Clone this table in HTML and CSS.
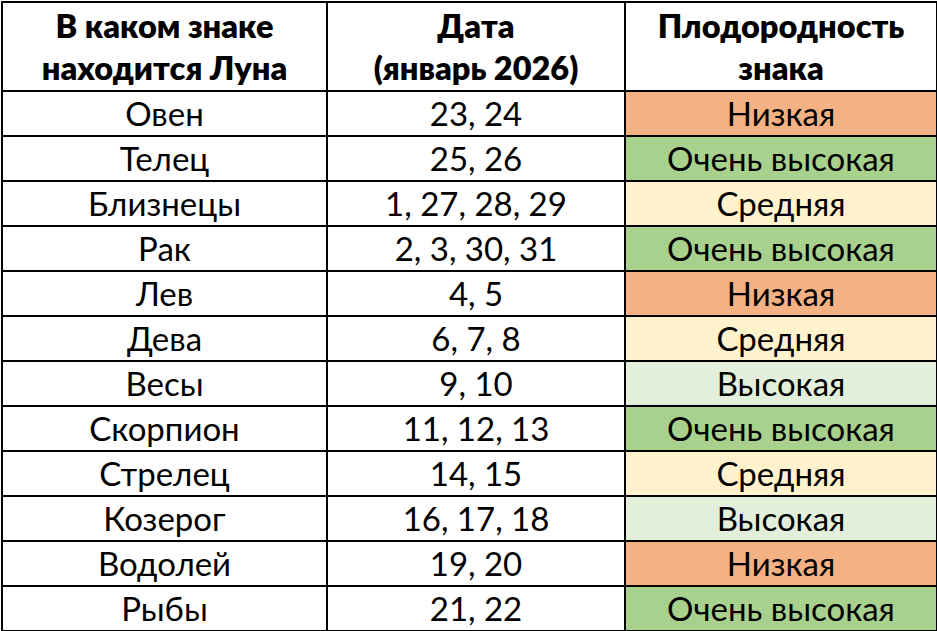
FILE: index.html
```html
<!DOCTYPE html>
<html lang="ru">
<head>
<meta charset="utf-8">
<link rel="stylesheet" href="styles.css">
</head>
<body>
<table class="moon">
  <colgroup>
    <col class="c1"><col class="c2"><col class="c3">
  </colgroup>
  <thead>
    <tr class="head">
      <th>В каком знаке<br>находится Луна</th>
      <th>Дата<br>(январь 2026)</th>
      <th>Плодородность<br>знака</th>
    </tr>
  </thead>
  <tbody>
    <tr><td>Овен</td><td>23, 24</td><td class="low">Низкая</td></tr>
    <tr><td>Телец</td><td>25, 26</td><td class="vhigh">Очень высокая</td></tr>
    <tr><td>Близнецы</td><td>1, 27, 28, 29</td><td class="mid">Средняя</td></tr>
    <tr><td>Рак</td><td>2, 3, 30, 31</td><td class="vhigh">Очень высокая</td></tr>
    <tr><td>Лев</td><td>4, 5</td><td class="low">Низкая</td></tr>
    <tr><td>Дева</td><td>6, 7, 8</td><td class="mid">Средняя</td></tr>
    <tr><td>Весы</td><td>9, 10</td><td class="high">Высокая</td></tr>
    <tr><td>Скорпион</td><td>11, 12, 13</td><td class="vhigh">Очень высокая</td></tr>
    <tr><td>Стрелец</td><td>14, 15</td><td class="mid">Средняя</td></tr>
    <tr><td>Козерог</td><td>16, 17, 18</td><td class="high">Высокая</td></tr>
    <tr><td>Водолей</td><td>19, 20</td><td class="low">Низкая</td></tr>
    <tr><td>Рыбы</td><td>21, 22</td><td class="vhigh">Очень высокая</td></tr>
  </tbody>
</table>
</body>
</html>
```
FILE: styles.css
```css
html, body {
  margin: 0;
  padding: 0;
  background: #ffffff;
}
body {
  padding: 1px 0 0 1px;
}
.moon {
  border-collapse: collapse;
  table-layout: fixed;
  width: 935px;
  font-family: Lato, "Open Sans", sans-serif;
  color: #000;
}
.c1 { width: 325px; }
.c2 { width: 298px; }
.c3 { width: 312px; }
.moon th, .moon td {
  border: 2px solid #000;
  padding: 0;
  text-align: center;
  vertical-align: middle;
}
.moon th {
  height: 87px;
  font-size: 32.5px;
  font-weight: 800;
  line-height: 42px;
}
.moon td {
  height: 43px;
  font-size: 33px;
  line-height: 43px;
}
.low { background: #f4b183; }
.vhigh { background: #a9d18e; }
.mid { background: #fff2cc; }
.high { background: #e2efda; }
```
